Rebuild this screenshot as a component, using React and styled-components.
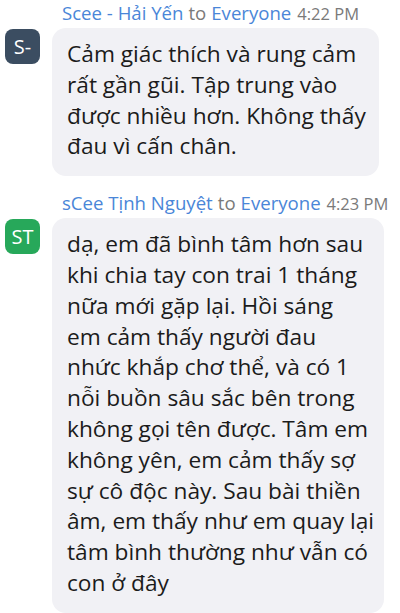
import styled, { createGlobalStyle } from "styled-components";

const GlobalStyle = createGlobalStyle`
  body {
    margin: 0;
    background: #ffffff;
    font-family: "Open Sans", "Noto Sans", sans-serif;
  }
`;

const messages = [
  {
    initials: "S-",
    color: "#3b4d61",
    sender: "Scee - Hải Yến",
    time: "4:22 PM",
    lines: [
      "Cảm giác thích và rung cảm",
      "rất gần gũi. Tập trung vào",
      "được nhiều hơn. Không thấy",
      "đau vì cấn chân.",
    ],
  },
  {
    initials: "ST",
    color: "#27a85a",
    sender: "sCee Tịnh Nguyệt",
    time: "4:23 PM",
    lines: [
      "dạ, em đã bình tâm hơn sau",
      "khi chia tay con trai 1 tháng",
      "nữa mới gặp lại. Hồi sáng",
      "em cảm thấy người đau",
      "nhức khắp chơ thể, và có 1",
      "nỗi buồn sâu sắc bên trong",
      "không gọi tên được. Tâm em",
      "không yên, em cảm thấy sợ",
      "sự cô độc này. Sau bài thiền",
      "âm, em thấy như em quay lại",
      "tâm bình thường như vẫn có",
      "con ở đây",
    ],
  },
];

export default function App() {
  return (
    <>
      <GlobalStyle />
      <ChatList>
        {messages.map((m) => (
          <Message key={m.time}>
            <Header>
              <Name>{m.sender}</Name>
              <To>to</To>
              <Name>Everyone</Name>
              <Time>{m.time}</Time>
            </Header>
            <Row>
              <Avatar $bg={m.color}>{m.initials}</Avatar>
              <Bubble>
                {m.lines.map((l) => (
                  <Line key={l}>{l}</Line>
                ))}
              </Bubble>
            </Row>
          </Message>
        ))}
      </ChatList>
    </>
  );
}

const ChatList = styled.div`
  display: flex;
  flex-direction: column;
  gap: 14px;
  padding: 0 21px 0 5px;
`;

const Message = styled.div`
  display: flex;
  flex-direction: column;
  gap: 2px;
`;

const Header = styled.div`
  display: flex;
  align-items: baseline;
  gap: 5px;
  padding-left: 57px;
  font-size: 18.6px;
  line-height: 25px;
  white-space: nowrap;
`;

const Name = styled.span`
  color: #4a86d8;
`;

const To = styled.span`
  color: #7a7a7a;
`;

const Time = styled.span`
  color: #7a7a7a;
  font-size: 16.5px;
  margin-left: 1px;
`;

const Row = styled.div`
  display: flex;
  align-items: flex-start;
  gap: 12px;
`;

const Avatar = styled.div`
  flex: none;
  width: 35px;
  height: 35px;
  margin-top: 1px;
  border-radius: 8px;
  background: ${(p) => p.$bg};
  color: #ffffff;
  font-size: 20px;
  display: flex;
  align-items: center;
  justify-content: center;
`;

const Bubble = styled.div`
  flex: 1;
  background: #f1f1f5;
  border-radius: 14px;
  padding: 11px 10px 14px 15px;
  color: #1b1b1b;
  font-size: 22.7px;
  line-height: 30.8px;
`;

const Line = styled.div`
  white-space: nowrap;
`;
